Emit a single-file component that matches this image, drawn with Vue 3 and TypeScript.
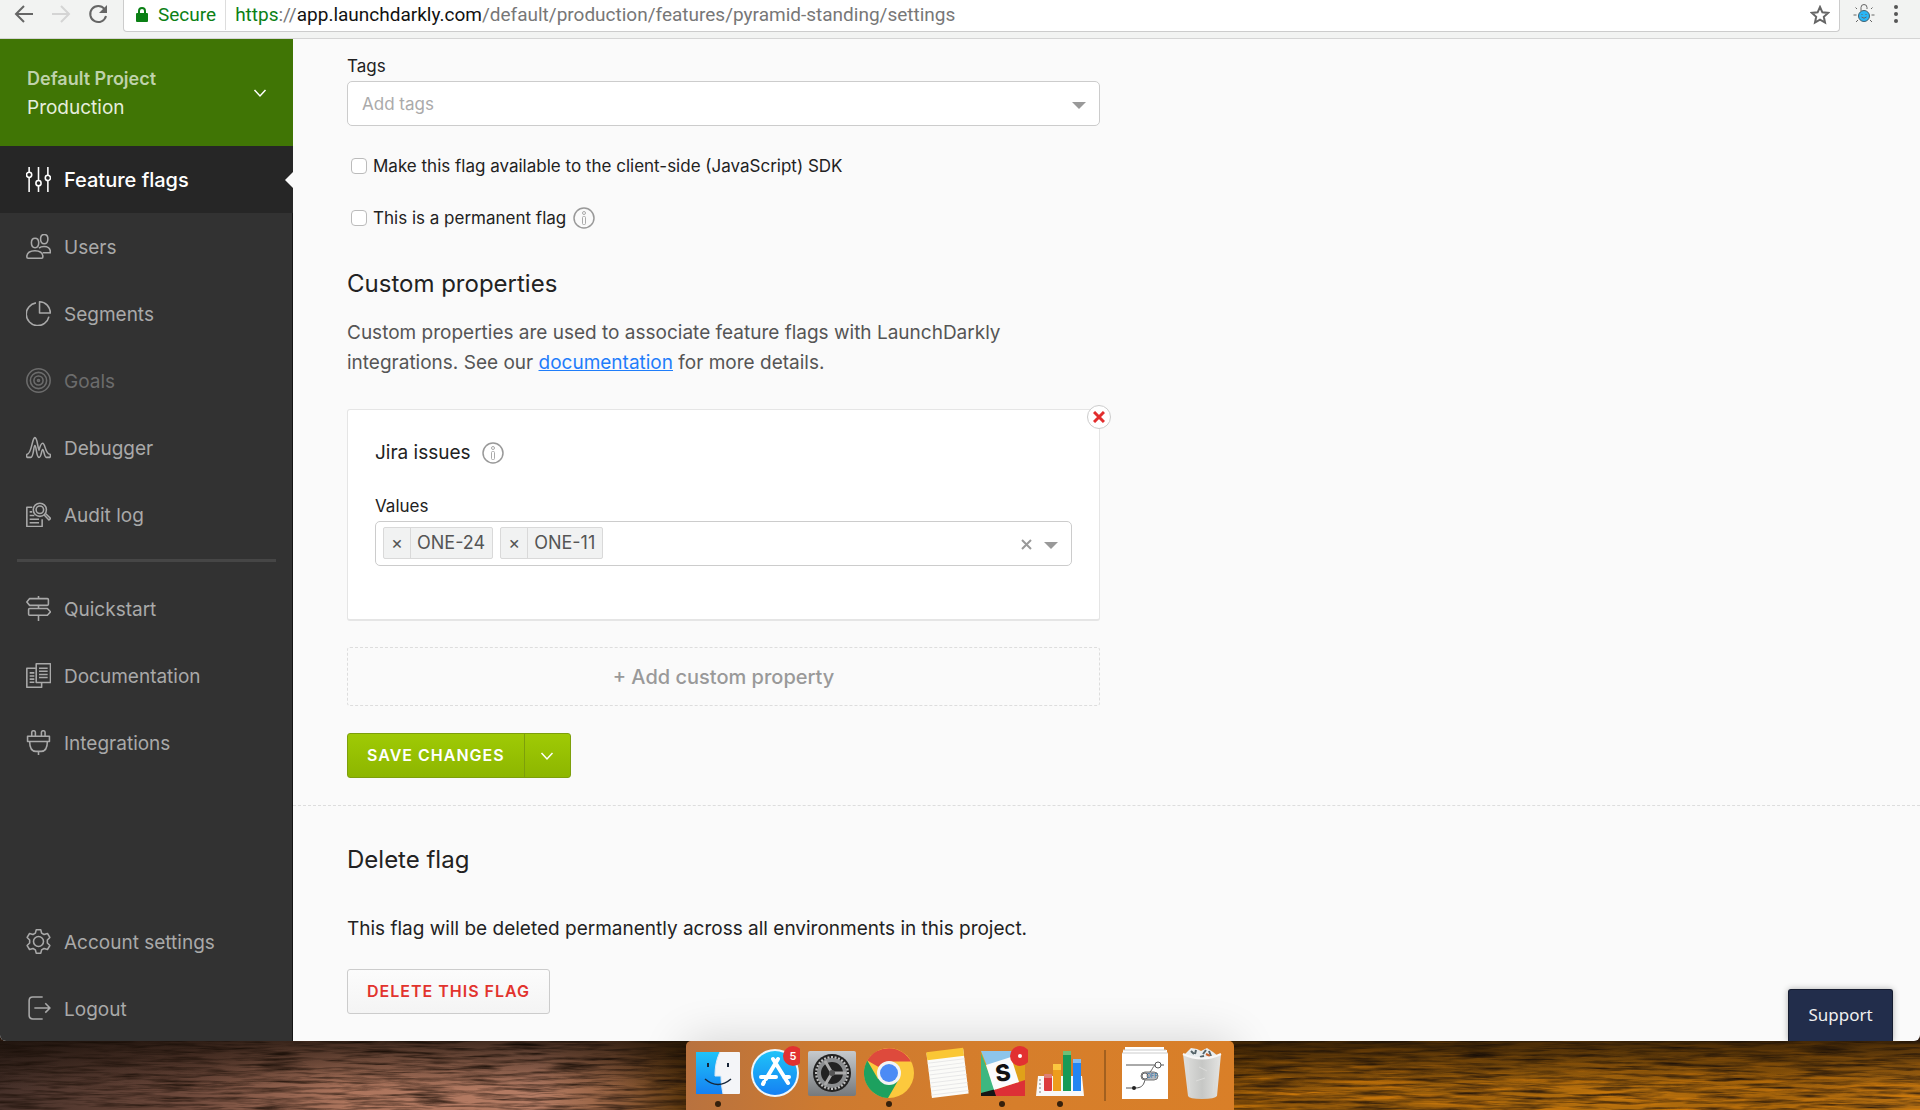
<script setup lang="ts">
import { ref } from 'vue'

interface NavItem {
  label: string
  icon: string[]
  state?: 'active' | 'muted'
}

const primaryNav: NavItem[] = [
  {
    label: 'Feature flags',
    state: 'active',
    icon: [
      'M3 0v5M3 10v14M12 0v13M12 18v6M21 0v8M21 13v11',
      'M.5 7.500a2.500 2.500 0 1 0 5 0a2.500 2.500 0 1 0-5 0',
      'M9.500 15.500a2.500 2.500 0 1 0 5 0a2.500 2.500 0 1 0-5 0',
      'M18.500 10.500a2.500 2.500 0 1 0 5 0a2.500 2.500 0 1 0-5 0',
    ],
  },
  {
    label: 'Users',
    icon: [
      'M5.200 8.500c0-6 7-6 7 0c0 6.300-7 6.300-7 0z',
      'M14 4.800c0-5.800 7-5.800 7 0c0 6-7 6-7 0z',
      'M.8 22c0-4 3-6 7.800-6s7.600 2 7.600 6c0 1-.4 1.200-1.200 1.200H2C1 23.200.8 23 .8 22z',
      'M12.500 13.600c1.200-1.200 3-1.600 4.800-1.600c4 0 6.200 2.400 6.200 6h-7.500',
    ],
  },
  {
    label: 'Segments',
    icon: [
      'M9.500 1.800A11 11 0 1 0 22 15',
      'M13 .8V11.500H23.400C23.400 5.600 18.800 .8 13 .8z',
    ],
  },
  {
    label: 'Goals',
    state: 'muted',
    icon: [
      'M.8 12a11.200 11.200 0 1 0 22.400 0a11.200 11.200 0 1 0-22.400 0',
      'M4.200 12a7.800 7.800 0 1 0 15.600 0a7.800 7.800 0 1 0-15.600 0',
      'M7.600 12a4.400 4.400 0 1 0 8.800 0a4.400 4.400 0 1 0-8.800 0',
      'M11 12a1 1 0 1 0 2 0a1 1 0 1 0-2 0',
    ],
  },
  {
    label: 'Debugger',
    icon: [
      'M1 18.500C5.500 18.500 5.800 2.500 8.500 2.500C11 2.500 11 12 12.500 14.500C13.500 11 14.200 8 16 8C18.500 8 18.500 18.500 23 18.500Q24 20 23 21.500H19.500C17.500 21.500 17.300 14 16 14C14.800 14 14.800 21.500 12.500 21.500C9.800 21.500 10 10 8.500 10C7.200 10 7.500 21.500 4.500 21.500H1Q0 20 1 18.500z',
    ],
  },
  {
    label: 'Audit log',
    icon: [
      'M6 5H.8V23.500H15.500V16.500',
      'M7 7.500a6.300 6.300 0 1 0 12.600 0a6.300 6.300 0 1 0-12.600 0',
      'M9.700 7.500a3.600 3.600 0 1 0 7.200 0a3.600 3.600 0 1 0-7.200 0',
      'M17.500 12.500l4.500 4.800l1.600-1.400l-4.600-4.600',
      'M3.500 9.500H6M3.500 13H8M3.500 16.500H12.500M3.500 20H12.500',
    ],
  },
]

const helpNav: NavItem[] = [
  {
    label: 'Quickstart',
    icon: [
      'M12 0v2M12 9v3M12 18.500V24',
      'M3.500 2.500H20.500Q21.500 2.500 21.500 3.500V8Q21.500 9 20.500 9H3.500L.8 5.800z',
      'M3.500 12H20.500L23.500 15.200L20.500 18.500H3.500Q2.500 18.500 2.500 17.500V13Q2.500 12 3.500 12z',
    ],
  },
  {
    label: 'Documentation',
    icon: [
      'M9.500 5H.8V23.300H15V19',
      'M9.800 .8H23.500V18.800H9.800z',
      'M12.500 5H20.800M12.500 8H20.800M12.500 11H20.800M12.500 14H20.800',
      'M3.500 9.500H8M3.500 12.500H8M3.500 15.500H8M3.500 18.500H8',
    ],
  },
  {
    label: 'Integrations',
    icon: [
      'M5.500 6V2.200C5.500 .2 9 .2 9 2.200V6M14.800 6V2.200C14.800 .2 18.300 .2 18.300 2.200V6',
      'M1.500 6H22.500V11H1.500z',
      'M3.500 11C3.500 17.500 6 20.500 9.500 20.500H14.500C18 20.500 20.500 17.500 20.500 11M12 20.500V24',
    ],
  },
]

const accountNav: NavItem[] = [
  {
    label: 'Account settings',
    icon: [
      'M7.200 12a4.800 4.800 0 1 0 9.600 0a4.800 4.800 0 1 0-9.600 0',
      'M9.800 .8H14.200L15 4L17.300 5.300L20.600 4.300L22.900 8.100L20.500 10.600V13.400L22.900 15.900L20.600 19.700L17.300 18.700L15 20L14.200 23.200H9.800L9 20L6.700 18.700L3.400 19.700L1.100 15.900L3.500 13.400V10.600L1.100 8.100L3.400 4.300L6.700 5.300L9 4z',
    ],
  },
  {
    label: 'Logout',
    icon: ['M16 1H6.500Q3 1 3 4.500V18.500Q3 22 6.500 22H16', 'M8 11.500H23M18.500 7L23 11.500L18.500 16'],
  },
]

const navGroups = [
  { name: 'primary', items: primaryNav },
  { name: 'help', items: helpNav },
  { name: 'account', items: accountNav },
]

const tags = ref('')
const clientSide = ref(false)
const permanent = ref(false)
const issues = ref(['ONE-24', 'ONE-11'])
const issueDraft = ref('')

function removeIssue(issue: string) {
  issues.value = issues.value.filter((entry) => entry !== issue)
}

const teeth = Array.from({ length: 28 }, (_, i) => (i * 360) / 28)
</script>

<template>
  <div class="screen">
    <div class="window">
      <header class="toolbar">
        <button class="tool" aria-label="Back">
          <svg width="20" height="20" viewBox="0 0 20 20"><path d="M19 10H2M10 2L2 10l8 8" /></svg>
        </button>
        <button class="tool dim" aria-label="Forward">
          <svg width="20" height="20" viewBox="0 0 20 20"><path d="M1 10h17M10 2l8 8l-8 8" /></svg>
        </button>
        <button class="tool" aria-label="Reload">
          <svg width="20" height="20" viewBox="0 0 20 20">
            <path d="M16.500 5A8 8 0 1 0 18 12" />
            <path class="solid" d="M19 1v8h-8z" />
          </svg>
        </button>
        <div class="address">
          <svg class="lock" width="12" height="15" viewBox="0 0 12 15">
            <path d="M3 7V4a3 3 0 0 1 6 0v3" fill="none" stroke="#0b8015" stroke-width="2" />
            <rect x="0" y="6" width="12" height="9" rx="1" fill="#0b8015" />
          </svg>
          <span class="secure">Secure</span>
          <span class="url"><span class="scheme">https</span>://<span class="host">app.launchdarkly.com</span>/default/production/features/pyramid-standing/settings</span>
          <button class="star" aria-label="Bookmark this page">
            <svg width="20" height="20" viewBox="0 0 20 20">
              <path d="M10 2l2.400 5.300l5.700.6l-4.300 3.900l1.200 5.700L10 14.600l-5 2.900l1.200-5.700L1.900 7.900l5.700-.6z" />
            </svg>
          </button>
        </div>
        <button class="tool ext" aria-label="Extension">
          <svg width="22" height="20" viewBox="0 0 22 20">
            <g fill="none" stroke="#555" stroke-width="1.500">
              <path d="M8 7V3.500a3 3 0 0 1 6 0V5M4 5L2.500 3.500M18 5l1.500-1.500M3.500 11H.5M18.500 11h3M5 16l-2 2M17 16l2 2" />
            </g>
            <circle cx="11" cy="12" r="5.500" fill="#29b6f6" stroke="#42606e" />
            <path d="M8.500 13q2.500 2.500 5 0M9 10v1M13 10v1" fill="none" stroke="#0a5f8c" />
          </svg>
        </button>
        <button class="tool more" aria-label="Menu">
          <svg width="6" height="20" viewBox="0 0 6 20">
            <circle cx="3" cy="3" r="2" /><circle cx="3" cy="10" r="2" /><circle cx="3" cy="17" r="2" />
          </svg>
        </button>
      </header>

      <div class="page">
        <aside class="sidebar">
          <button class="switcher">
            <span class="names">
              <span class="project">Default Project</span>
              <span class="environment">Production</span>
            </span>
            <svg width="14" height="10" viewBox="0 0 14 10"><path d="M1.500 2L7 8l5.500-6" /></svg>
          </button>
          <nav class="nav">
            <ul v-for="group in navGroups" :key="group.name" :class="['group', group.name]">
              <li v-for="item in group.items" :key="item.label">
                <a href="#" :class="['item', item.state]">
                  <svg class="icon" width="25" height="25" viewBox="0 0 24 24">
                    <path v-for="d in item.icon" :key="d" :d="d" />
                  </svg>
                  <span class="label">{{ item.label }}</span>
                </a>
              </li>
            </ul>
          </nav>
        </aside>

        <main class="main">
          <form class="settings" @submit.prevent>
            <div class="field">
              <label for="tags">Tags</label>
              <div class="combo">
                <input id="tags" v-model="tags" type="text" placeholder="Add tags" />
                <span class="caret"></span>
              </div>
            </div>

            <div class="check">
              <input id="client-side" v-model="clientSide" type="checkbox" />
              <label for="client-side">Make this flag available to the client-side (JavaScript) SDK</label>
            </div>
            <div class="check">
              <input id="permanent" v-model="permanent" type="checkbox" />
              <label for="permanent">This is a permanent flag</label>
              <svg class="info" width="22" height="22" viewBox="0 0 22 22">
                <circle cx="11" cy="11" r="10" /><circle class="thin" cx="11" cy="6" r="1.500" />
                <rect class="thin" x="9.500" y="9.500" width="3" height="8" rx="1" />
              </svg>
            </div>

            <h2>Custom properties</h2>
            <p class="intro">
              Custom properties are used to associate feature flags with LaunchDarkly<br />
              integrations. See our <a href="#">documentation</a> for more details.
            </p>

            <section class="card">
              <button type="button" class="remove" aria-label="Remove property">
                <svg width="12" height="12" viewBox="0 0 12 12"><path d="M1 1l10 10M11 1L1 11" /></svg>
              </button>
              <h3>
                Jira issues
                <svg class="info" width="22" height="22" viewBox="0 0 22 22">
                  <circle cx="11" cy="11" r="10" /><circle class="thin" cx="11" cy="6" r="1.500" />
                  <rect class="thin" x="9.500" y="9.500" width="3" height="8" rx="1" />
                </svg>
              </h3>
              <div class="field">
                <label for="values">Values</label>
                <div class="combo filled">
                  <span v-for="issue in issues" :key="issue" class="chip">
                    <button type="button" :aria-label="`Remove ${issue}`" @click="removeIssue(issue)">×</button>
                    <span>{{ issue }}</span>
                  </span>
                  <input id="values" v-model="issueDraft" type="text" />
                  <button type="button" class="clear" aria-label="Clear all" @click="issues = []">
                    <svg width="11" height="11" viewBox="0 0 11 11"><path d="M1 1l9 9M10 1l-9 9" /></svg>
                  </button>
                  <span class="caret"></span>
                </div>
              </div>
            </section>

            <button type="button" class="add">+ Add custom property</button>

            <div class="save">
              <button type="submit" class="save-main">SAVE CHANGES</button>
              <button type="button" class="save-more" aria-label="More save options">
                <svg width="14" height="10" viewBox="0 0 14 10"><path d="M1.500 2L7 8l5.500-6" /></svg>
              </button>
            </div>
          </form>

          <section class="danger">
            <h2>Delete flag</h2>
            <p>This flag will be deleted permanently across all environments in this project.</p>
            <button class="delete">DELETE THIS FLAG</button>
          </section>

          <button class="support">Support</button>
        </main>
      </div>
    </div>

    <footer class="desktop">
      <svg class="wallpaper" width="100%" height="100%" aria-hidden="true">
        <defs>
          <filter id="ripple" x="0" y="0" width="100%" height="100%" color-interpolation-filters="sRGB">
            <feTurbulence type="fractalNoise" baseFrequency="0.02 0.3" numOctaves="4" seed="7" />
            <feColorMatrix values="0 0 0 0 .12  0 0 0 0 .07  0 0 0 0 .04  1.800 .8 0 0 -1.100" />
          </filter>
          <filter id="glint" x="0" y="0" width="100%" height="100%" color-interpolation-filters="sRGB">
            <feTurbulence type="fractalNoise" baseFrequency="0.012 0.28" numOctaves="3" seed="21" />
            <feColorMatrix values="0 0 0 0 .85  0 0 0 0 .5  0 0 0 0 .04  0 2.400 0 0 -1.100" />
          </filter>
          <linearGradient id="shade" x1="0" y1="0" x2="0" y2="1">
            <stop offset="0" stop-color="#120a04" stop-opacity=".7" />
            <stop offset=".7" stop-color="#120a04" stop-opacity="0" />
          </linearGradient>
        </defs>
        <rect x="64%" width="36%" height="100%" filter="url(#glint)" />
        <rect width="100%" height="100%" filter="url(#ripple)" />
        <rect width="100%" height="100%" fill="url(#shade)" />
      </svg>

      <div class="dock">
        <!-- Finder -->
        <svg width="50" height="69" viewBox="0 0 50 69">
          <defs>
            <linearGradient id="finder" x2="0" y2="1"><stop stop-color="#1fc3f8" /><stop offset="1" stop-color="#1580f3" /></linearGradient>
          </defs>
          <rect x="3" y="11" width="44" height="42" rx="1" fill="#f4f5f8" />
          <path d="M3 11H27C23 19 22 27 22 35H28C28 42 29 48 30 53H3z" fill="url(#finder)" />
          <path d="M27 11C23 19 22 27 22 35H28C28 42 29 48 30 53" fill="none" stroke="#dfeaf5" />
          <path d="M15 22v4M35 22v4" stroke="#16263a" stroke-width="2" />
          <path d="M12 38Q25 49 38 38" fill="none" stroke="#16263a" stroke-width="1.500" />
          <circle cx="25" cy="63" r="3" fill="#35200c" />
        </svg>
        <!-- App Store -->
        <svg width="50" height="69" viewBox="0 0 50 69">
          <circle cx="25" cy="32" r="24" fill="#eef6fb" />
          <circle cx="25" cy="32" r="22" fill="url(#finder)" />
          <g stroke="#fff" stroke-width="4" stroke-linecap="round">
            <path d="M28 18L16 38M23 18L38 42M11 36H26M34 36H39M14 41l-1 2" />
          </g>
          <circle cx="43" cy="15" r="10" fill="#e23131" />
          <text x="43" y="19" text-anchor="middle" class="badge">5</text>
        </svg>
        <!-- System Preferences -->
        <svg width="50" height="69" viewBox="0 0 50 69">
          <defs>
            <linearGradient id="steel" x2="0" y2="1"><stop stop-color="#c6cacd" /><stop offset="1" stop-color="#76797c" /></linearGradient>
          </defs>
          <rect x="1" y="10" width="48" height="45" rx="2" fill="url(#steel)" />
          <circle cx="25" cy="32" r="19" fill="#222" />
          <g stroke="#c0c0c0" stroke-width="2">
            <path v-for="angle in teeth" :key="angle" d="M25 15v3" :transform="`rotate(${angle} 25 32)`" />
          </g>
          <circle cx="25" cy="32" r="13" fill="none" stroke="#8b8d8f" stroke-width="4" />
          <path d="M25 32L18 20M25 32L18 44M25 32H39" stroke="#aaa" stroke-width="3" />
          <circle cx="25" cy="32" r="3" fill="#555" />
        </svg>
        <!-- Chrome -->
        <svg width="50" height="69" viewBox="0 0 50 69">
          <circle cx="25" cy="32" r="25" fill="#fcc93d" />
          <path d="M25 32L3.300 19.500A25 25 0 0 1 47 20.500H25z" fill="#de4a3c" />
          <path d="M3.300 19.500A25 25 0 0 0 24 57L35 38L25 32L14 38z" fill="#1da15f" />
          <circle cx="25" cy="32" r="12" fill="#f4f4f4" />
          <circle cx="25" cy="32" r="9" fill="#4c8bf5" />
          <circle cx="25" cy="63" r="3" fill="#35200c" />
        </svg>
        <!-- Notes -->
        <svg width="50" height="69" viewBox="0 0 50 69">
          <g transform="rotate(-7 25 32)">
            <rect x="8" y="10" width="37" height="45" fill="#fbfbf8" />
            <rect x="8" y="9" width="37" height="8" fill="#fac735" />
            <path d="M8 20H45M8 24H45M8 28H45M8 32H45M8 36H45M8 40H45M8 44H45M8 48H45M8 52H45" stroke="#e8e8e8" />
          </g>
        </svg>
        <!-- Slack -->
        <svg width="50" height="69" viewBox="0 0 50 69">
          <rect x="3" y="10" width="44" height="45" rx="1" fill="#e0a119" />
          <path d="M3 10H47V15L9 25z" fill="#8dc5ea" />
          <path d="M3 12L18 51L3 52z" fill="#3eb780" />
          <path d="M3 52L18 48V55H3z" fill="#161616" />
          <path d="M16 49L47 39V55H18z" fill="#dd3036" />
          <path d="M8 24L33 16L41 41L16 49z" fill="#fbfbfb" />
          <text x="25" y="40" text-anchor="middle" transform="rotate(-8 25 32)" class="slack">S</text>
          <circle cx="42" cy="15" r="10" fill="#e23131" />
          <circle cx="42" cy="15" r="2" fill="#fff" />
          <circle cx="24" cy="63" r="3" fill="#35200c" />
        </svg>
        <!-- Numbers -->
        <svg width="50" height="69" viewBox="0 0 50 69">
          <path d="M3 35H47L49 55H1z" fill="#f8f8f8" />
          <path d="M5 38v14" stroke="#bbb" stroke-width="2" stroke-dasharray="2 2" />
          <rect x="9" y="33" width="8" height="17" rx="1" fill="#dc3b3d" />
          <rect x="9" y="33" width="8" height="4" rx="1" fill="#dd8076" />
          <rect x="18" y="23" width="8" height="27" fill="#ee9d1c" />
          <rect x="18" y="23" width="8" height="6" fill="#fbc63f" />
          <rect x="28" y="10" width="8" height="40" fill="#179a56" />
          <rect x="28" y="10" width="8" height="4" fill="#6fbf77" />
          <rect x="38" y="18" width="8" height="32" fill="#2385f2" />
          <rect x="38" y="18" width="8" height="4" fill="#84bdf0" />
          <circle cx="25" cy="63" r="3" fill="#35200c" />
        </svg>
        <span class="rule"></span>
        <!-- Minimised document -->
        <svg width="50" height="69" viewBox="0 0 50 69">
          <path d="M5 6H44V9H47V12H48V58H2V12H3V9H5z" fill="#fff" />
          <path d="M2 12H48M3 9H46" stroke="#ccc" stroke-width="1" />
          <path d="M6 24H44M6 47H15C28 47 22 36 30 31C33 28 33 24 37 24" fill="none" stroke="#555" />
          <circle cx="38" cy="24" r="3" fill="#fff" stroke="#555" />
          <circle cx="14" cy="47" r="2" fill="#222" />
          <rect x="21" y="31" width="17" height="8" rx="4" fill="#b8bcc0" stroke="#777" />
          <circle cx="25" cy="35" r="3" fill="#fff" stroke="#666" />
          <text x="32" y="37" text-anchor="middle" class="off">OFF</text>
        </svg>
        <!-- Trash -->
        <svg width="50" height="69" viewBox="0 0 50 69">
          <defs>
            <linearGradient id="bin" x2="1" y2="0"><stop stop-color="#e0e0de" /><stop offset=".5" stop-color="#c6c7c5" /><stop offset="1" stop-color="#e4e4e2" /></linearGradient>
          </defs>
          <path d="M8 13L14 7l6 1l4 2l6-3l6 4l5 4l-3 5H11z" fill="#e9edef" />
          <path d="M14 10l3 3M19 9l-1 4M26 13l3-4M32 10l2 5M23 16l4-1" stroke="#55646a" stroke-width="2" />
          <path d="M29 13l4 2" stroke="#c7612c" stroke-width="2" />
          <path d="M6 13Q25 22 44 13L40 55Q38 58 25 58T11 55z" fill="url(#bin)" />
          <path d="M6 13Q25 22 44 13" fill="none" stroke="#f7f7f7" stroke-width="2" />
          <path d="M11 20l2 32M39 20l-3 32M22 26l8 4M19 40l9-3" fill="none" stroke="#dcdcda" />
        </svg>
      </div>
    </footer>
  </div>
</template>

<style>
body {
  margin: 0;
}
</style>

<style scoped>
.screen {
  display: flex;
  flex-direction: column;
  min-height: 100vh;
  background: #2b1a10;
  font-family: Inter, "Liberation Sans", sans-serif;
  color: #222;
}
.screen * {
  box-sizing: border-box;
}
button {
  margin: 0;
  padding: 0;
  border: 0;
  background: none;
  font: inherit;
  color: inherit;
  cursor: pointer;
}
svg {
  display: block;
  flex: none;
}

.window {
  flex: 1;
  display: flex;
  flex-direction: column;
  overflow: hidden;
  border-radius: 0 0 6px 6px;
  background: #fafafa;
}

/* Browser toolbar */
.toolbar {
  display: flex;
  align-items: flex-start;
  height: 39px;
  padding-left: 14px;
  border-bottom: 1px solid #d4d4d4;
  background: #f2f3f2;
}
.tool {
  width: 20px;
  margin-top: 4px;
  margin-right: 17px;
}
.tool path {
  fill: none;
  stroke: #666;
  stroke-width: 2;
}
.tool path.solid {
  fill: #666;
  stroke: none;
}
.tool.dim path {
  stroke: #d4d4d4;
}
.address {
  flex: 1;
  display: flex;
  align-items: center;
  height: 32px;
  margin-left: -2px;
  padding: 0 9px 2px 12px;
  border: 1px solid #ccc;
  border-top: 0;
  border-radius: 0 0 4px 4px;
  background: #fff;
  font-family: Roboto, sans-serif;
  font-size: 19px;
  line-height: 30px;
  white-space: nowrap;
}
.secure {
  margin-left: 10px;
  padding-right: 9px;
  border-right: 1px solid #ddd;
  color: #0b8015;
}
.url {
  flex: 1;
  padding-left: 9px;
  overflow: hidden;
  color: #777;
}
.scheme {
  color: #0b8015;
}
.host {
  color: #111;
}
.star path {
  fill: none;
  stroke: #666;
  stroke-width: 2;
}
.tool.ext {
  width: 22px;
  margin-left: 13px;
  margin-right: 18px;
}
.tool.ext path {
  stroke-width: 1;
}
.tool.more {
  width: 6px;
  margin-right: 21px;
}
.more circle {
  fill: #555;
}

/* Sidebar */
.page {
  flex: 1;
  display: flex;
}
.sidebar {
  flex: none;
  display: flex;
  flex-direction: column;
  width: 293px;
  background: #323232;
  box-shadow: inset -1px 0 #161616;
}
.switcher {
  display: flex;
  align-items: center;
  justify-content: space-between;
  height: 107px;
  padding: 0 26px 0 27px;
  background: #407505;
  text-align: left;
}
.names {
  display: flex;
  flex-direction: column;
}
.names span {
  line-height: 29px;
}
.project {
  font-size: 18px;
  font-weight: 600;
  color: #bfd2ab;
}
.environment {
  font-size: 19px;
  color: #e6eedd;
}
.switcher path,
.save-more path {
  fill: none;
  stroke: #fff;
  stroke-width: 1.5;
}
.nav {
  flex: 1;
  display: flex;
  flex-direction: column;
}
.group {
  margin: 0;
  padding: 0;
  list-style: none;
}
.group.help::before {
  content: "";
  display: block;
  height: 3px;
  margin: 11px 17px 13px;
  background: #464646;
}
.group.account {
  margin-top: auto;
  margin-bottom: -1px;
}
.item {
  position: relative;
  display: flex;
  align-items: center;
  gap: 13px;
  height: 67px;
  padding-left: 26px;
  color: #a9a9a9;
  font-size: 19px;
  text-decoration: none;
}
.label {
  padding-top: 1px;
}
.icon {
  fill: none;
  stroke: currentColor;
  stroke-width: 1.5;
  stroke-linejoin: round;
}
.item.muted {
  color: #6c6c6c;
}
.item.active {
  background: #262626;
  color: #fff;
  font-size: 20px;
  font-weight: 500;
}
.item.active::after {
  content: "";
  position: absolute;
  right: 0;
  top: 26px;
  border: 8px solid transparent;
  border-left: 0;
  border-right-color: #fafafa;
}

/* Settings form */
.main {
  position: relative;
  flex: 1;
}
.settings {
  padding: 15px 54px 27px;
}
.settings > * {
  max-width: 753px;
}
.field label {
  display: block;
  font-size: 17px;
  line-height: 24px;
}
.field .combo {
  margin-top: 3px;
}
.combo {
  display: flex;
  align-items: center;
  height: 45px;
  padding: 0 13px 0 14px;
  border: 1px solid #ccc;
  border-radius: 5px;
  background: #fff;
}
.combo input {
  flex: 1;
  min-width: 0;
  padding: 0;
  border: 0;
  outline: 0;
  background: none;
  font: inherit;
  font-size: 17px;
}
.combo input::placeholder {
  color: #aaa;
  opacity: 1;
}
.caret {
  margin-top: 3px;
  border: 7px solid transparent;
  border-top-color: #999;
  border-bottom: 0;
}
.check {
  display: flex;
  align-items: center;
  height: 24px;
  margin-top: 28px;
  padding-left: 4px;
  font-size: 17px;
}
.check input {
  appearance: none;
  width: 16px;
  height: 16px;
  margin: 0 6px 0 0;
  border: 1px solid #bbb;
  border-radius: 4px;
  background: #fff;
}
.info {
  fill: none;
  stroke: #999;
  stroke-width: 1.5;
}
.info .thin {
  stroke: #aaa;
  stroke-width: 1;
}
.check .info {
  margin-left: 7px;
}
h2 {
  margin: 0;
  font-size: 24px;
  font-weight: 400;
  line-height: 32px;
}
.settings h2 {
  margin-top: 38px;
}
.intro {
  margin: 18px 0 0;
  color: #555;
  font-size: 19px;
  line-height: 30px;
  white-space: nowrap;
}
.intro a {
  color: #1f7dfa;
}
.card {
  position: relative;
  height: 212px;
  margin-top: 31px;
  padding: 27px;
  border: 1px solid #e5e5e5;
  border-bottom-width: 2px;
  border-radius: 3px;
  background: #fff;
}
.remove {
  position: absolute;
  top: -5px;
  right: -12px;
  display: grid;
  place-items: center;
  width: 24px;
  height: 24px;
  border: 1px solid #ccc;
  border-radius: 50%;
  background: #fff;
}
.remove path {
  stroke: #e22d2d;
  stroke-width: 3;
}
h3 {
  display: flex;
  align-items: center;
  gap: 11px;
  margin: 0 0 25px;
  font-size: 19px;
  font-weight: 400;
  line-height: 32px;
}
.combo.filled {
  gap: 7px;
  padding-left: 7px;
}
.filled input {
  align-self: stretch;
}
.chip {
  display: flex;
  height: 32px;
  margin-bottom: 2px;
  border: 1px solid #d9d9d9;
  border-radius: 2px;
  background: #f1f2f2;
  color: #555;
  font-size: 18px;
  line-height: 30px;
}
.chip button {
  width: 27px;
  border-right: 1px solid #d9d9d9;
}
.chip span {
  padding: 0 7px 0 6px;
}
.clear path {
  stroke: #999;
  stroke-width: 2;
}
.filled .clear {
  margin: 2px 5px 0 0;
}
.add {
  display: block;
  width: 100%;
  height: 59px;
  margin-top: 26px;
  border: 1px dashed #ddd;
  border-radius: 3px;
  color: #999;
  font-size: 20px;
  font-weight: 500;
}
.save {
  display: flex;
  width: max-content;
  height: 45px;
  margin-top: 27px;
  border: 1px solid #7d9f0b;
  border-radius: 3px;
  background: linear-gradient(#9fca05, #8db600);
  color: #fff;
}
.save-main,
.delete {
  padding: 0 19px 2px;
  font-size: 16px;
  font-weight: 600;
  letter-spacing: 1px;
}
.save-more {
  display: grid;
  place-items: center;
  width: 46px;
  border-left: 1px solid #7d9f0b;
}

/* Delete section */
.danger {
  padding: 38px 54px 26px;
  border-top: 1px dashed #ddd;
}
.danger p {
  margin: 37px 0 24px;
  font-size: 19px;
  line-height: 32px;
}
.delete {
  height: 45px;
  border: 1px solid #ccc;
  border-radius: 3px;
  background: linear-gradient(#fcfcfc, #f4f4f4);
  color: #e2332d;
}
.support {
  position: absolute;
  right: 27px;
  bottom: 0;
  width: 105px;
  height: 52px;
  padding-bottom: 2px;
  border: 1px solid #151c30;
  border-bottom: 0;
  border-radius: 3px 3px 0 0;
  background: #222d4b;
  box-shadow: 0 0 6px rgba(0, 0, 0, 0.3);
  color: #f0f0f0;
  font-family: "Noto Sans", sans-serif;
  font-size: 17px;
}

/* Desktop strip */
.desktop {
  position: relative;
  display: flex;
  justify-content: center;
  height: 69px;
  background: linear-gradient(90deg, #453029 0, #6f4a3c 10%, #ad755d 18%, #b57c64 28%, #94603f 32%, #5a3508 36%, #8a5209 64%, #9f610b 76%, #b56f0d 84%, #a3620a 92%, #b56f12 100%);
}
.wallpaper {
  position: absolute;
  inset: 0;
}
.dock {
  position: relative;
  display: flex;
  gap: 7px;
  padding: 0 7px;
  border-radius: 5px 5px 0 0;
  background: linear-gradient(90deg, #b8723f 0, #cd7a30 25%, #d67e2b 60%, #d97f28 100%);
  box-shadow: 0 0 46px rgba(0, 0, 0, 0.16);
}
.rule {
  width: 2px;
  height: 51px;
  margin: 9px 7px 0 12px;
  background: #a2601f;
}
.badge {
  fill: #fff;
  font-size: 11px;
  font-weight: 600;
}
.slack {
  fill: #111;
  font-size: 23px;
  font-weight: 800;
}
.off {
  fill: #2a6ca5;
  font-size: 6px;
}
</style>
